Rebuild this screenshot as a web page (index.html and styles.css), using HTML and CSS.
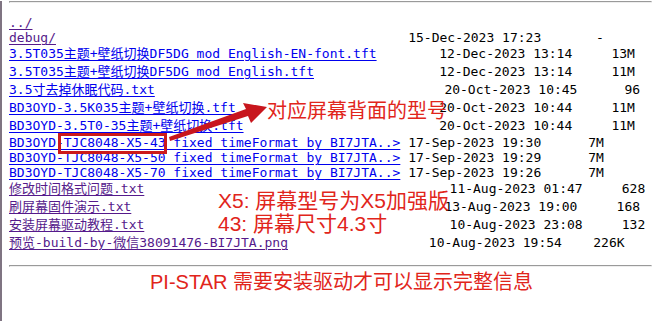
FILE: index.html
```html
<!DOCTYPE html>
<html lang="zh">
  <head>
    <meta charset="UTF-8" />
    <meta name="viewport" content="width=device-width, initial-scale=1.0" />
    <title>Index of /tft/</title>
    <link rel="stylesheet" href="styles.css">
  </head>
  <body>
    <div class="page">
      <hr class="top-rule" />

      <!-- nginx autoindex listing -->
      <div class="listing">
<div class="row"><a class="seen" href="../">../</a></div>
<div class="row"><a class="seen" href="debug/">debug/</a>                                             15-Dec-2023 17:23       -</div>
<div class="row cjk"><a href="#">3.5T035主题+壁纸切换DF5DG_mod_English-EN-font.tft</a>        12-Dec-2023 13:14     13M</div>
<div class="row cjk"><a href="#">3.5T035主题+壁纸切换DF5DG_mod_English.tft</a>                12-Dec-2023 13:14     11M</div>
<div class="row cjk"><a href="#">3.5寸去掉休眠代码.txt</a>                                     20-Oct-2023 10:45      96</div>
<div class="row cjk"><a href="#">BD3OYD-3.5K035主题+壁纸切换.tft</a>                          20-Oct-2023 10:44     11M</div>
<div class="row cjk"><a href="#">BD3OYD-3.5T0-35主题+壁纸切换.tft</a>                         20-Oct-2023 10:44     11M</div>
<div class="row"><a href="#">BD3OYD-TJC8048-X5-43_fixed_timeFormat_by_BI7JTA..&gt;</a> 17-Sep-2023 19:30      7M</div>
<div class="row"><a href="#">BD3OYD-TJC8048-X5-50_fixed_timeFormat_by_BI7JTA..&gt;</a> 17-Sep-2023 19:29      7M</div>
<div class="row"><a href="#">BD3OYD-TJC8048-X5-70_fixed_timeFormat_by_BI7JTA..&gt;</a> 17-Sep-2023 19:26      7M</div>
<div class="row cjk"><a class="seen" href="#">修改时间格式问题.txt</a>                                       11-Aug-2023 01:47     628</div>
<div class="row cjk"><a class="seen" href="#">刷屏幕固件演示.txt</a>                                        13-Aug-2023 19:00     168</div>
<div class="row cjk"><a class="seen" href="#">安装屏幕驱动教程.txt</a>                                       10-Aug-2023 23:08     132</div>
<div class="row cjk"><a class="seen" href="#">预览-build-by-微信38091476-BI7JTA.png</a>                  10-Aug-2023 19:54    226K</div>
      </div>

      <hr />
      <p class="notice">PI-STAR 需要安装驱动才可以显示完整信息</p>

      <!-- annotations drawn over the listing -->
      <div class="mark-box"></div>
      <svg class="arrow" width="112" height="48" viewBox="0 0 112 48">
        <polygon points="9,40 86,12 83,6 107,10 91,26 88,19 10,44" fill="#c8161d" />
      </svg>
      <p class="note note-model">对应屏幕背面的型号</p>
      <p class="note note-spec">X5: 屏幕型号为X5加强版<br />43: 屏幕尺寸4.3寸</p>
    </div>
  </body>
</html>
```

FILE: styles.css
```css
body {
  margin: 0;
  background: #fff;
}
.page {
  position: relative;
  min-height: 321px;
  box-sizing: border-box;
  border-left: 2px solid #7f7482;
  padding-left: 7px;
}
hr {
  margin: 0;
}
.top-rule {
  margin-top: 1px;
}
.listing {
  margin: 12px 0 13px;
  font-family: "DejaVu Sans Mono", "Noto Sans CJK SC", monospace;
  font-size: 13px;
  color: #000;
}
.row {
  white-space: pre;
  height: 15px;
  line-height: 15px;
}
.row.cjk {
  height: 18px;
  line-height: 18px;
}
a {
  color: #0000ee;
  text-decoration-thickness: 1px;
  text-underline-offset: 2px;
}
a.seen {
  color: #551a8b;
}
.notice {
  margin: 3px 0 0;
  padding-left: 141px;
  font-family: "Liberation Sans", "Noto Sans CJK SC", sans-serif;
  font-size: 20px;
  line-height: 24px;
  color: #e1251b;
}
.note {
  position: absolute;
  margin: 0;
  font-family: "Liberation Sans", "Noto Sans CJK SC", sans-serif;
  color: #e1251b;
  white-space: nowrap;
}
.note-model {
  left: 265px;
  top: 100px;
  font-size: 20px;
  line-height: 20px;
}
.note-spec {
  left: 216px;
  top: 188px;
  font-size: 21px;
  line-height: 23px;
}
.mark-box {
  position: absolute;
  left: 56px;
  top: 132px;
  width: 109px;
  height: 21px;
  box-sizing: border-box;
  border: 3px solid #cc1a1a;
}
.arrow {
  position: absolute;
  left: 158px;
  top: 96px;
}
```
